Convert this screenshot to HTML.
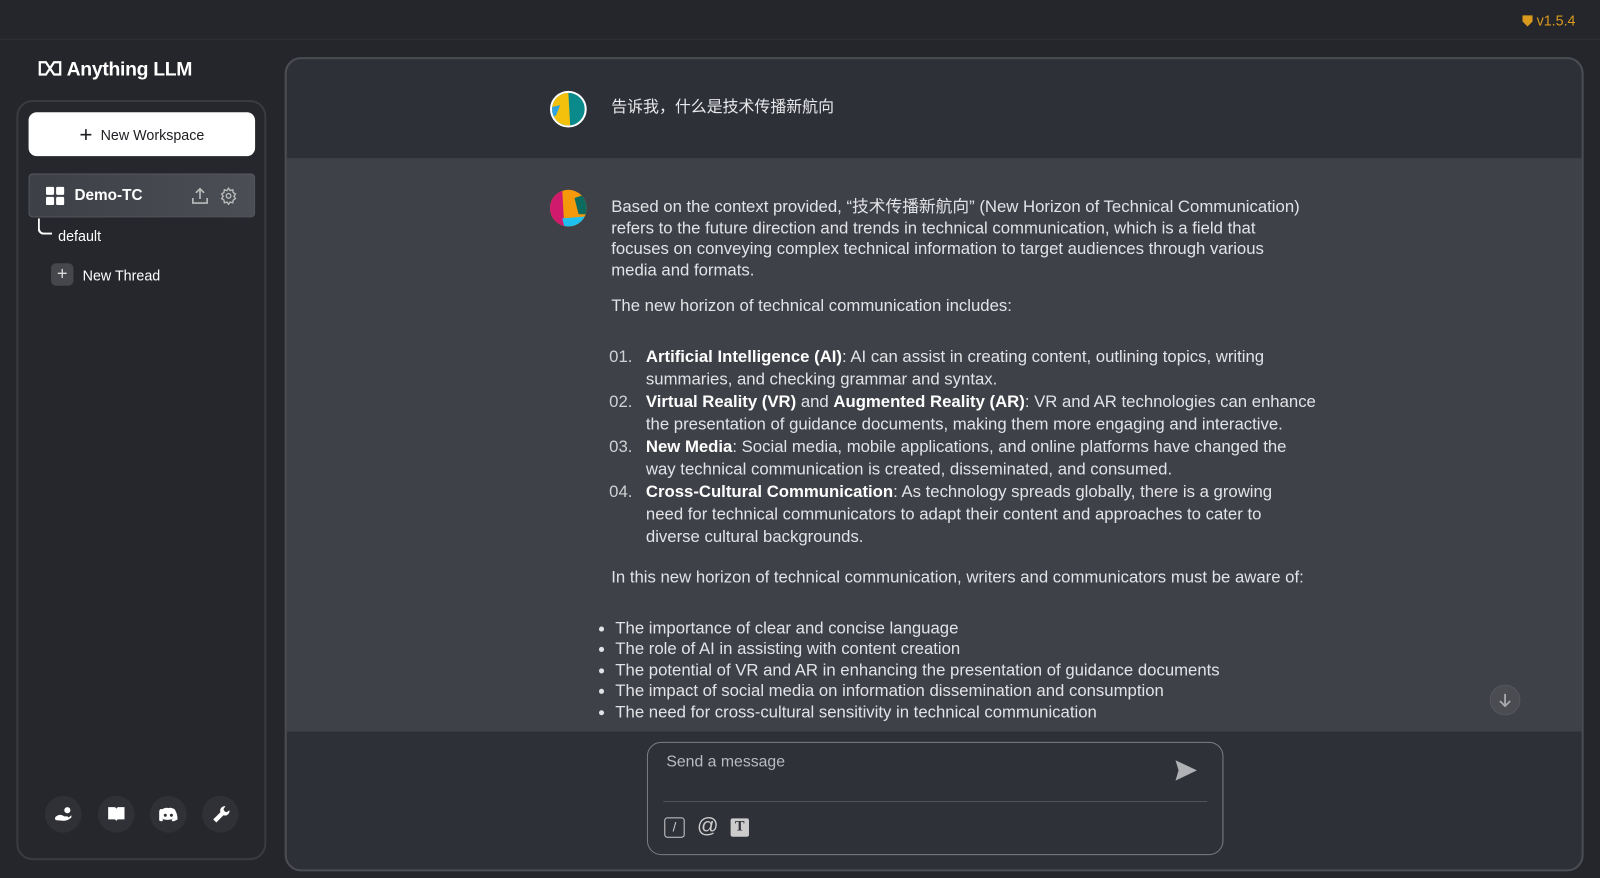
<!DOCTYPE html>
<html><head><meta charset="utf-8"><style>
*{box-sizing:border-box;margin:0;padding:0}
html,body{width:1600px;height:877px;background:#25262b;overflow:hidden}
#w{position:absolute;left:0;top:0;width:1568px;height:860px;transform:scale(1.0204);transform-origin:0 0;font-family:"Liberation Sans","Noto Sans CJK SC",sans-serif;color:#e6e7ea}
.topline{position:absolute;left:0;right:0;top:38px;height:1px;background:#2f3036}
.ver{position:absolute;right:24px;top:12px;color:#d99a1e;font-size:14px}
.logo{position:absolute;left:37px;top:58px;font-size:19px;font-weight:bold;color:#fff;letter-spacing:-0.3px}
.side{position:absolute;left:16px;top:98px;width:245px;height:745px;border:2px solid #3a3b41;border-radius:16px;background:#26272c}
.nw{position:absolute;left:10px;top:10px;width:222px;height:43px;background:#fff;border-radius:8px;color:#1d1e22;font-size:14px;display:flex;align-items:center;justify-content:center;gap:8px}
.ws{position:absolute;left:10px;top:70px;width:222px;height:43px;background:linear-gradient(90deg,#3d4047,#4b4e55);border:1px solid #55585e;border-radius:4px;display:flex;align-items:center;padding-left:16px;font-weight:bold;font-size:15px;color:#fff}
.sb{position:absolute;width:36px;height:36px;border-radius:50%;background:#303136;top:680px;display:flex;align-items:center;justify-content:center}
.main{position:absolute;left:279px;top:56px;width:1273px;height:798px;border:2px solid #4b4d52;border-radius:16px;background:#2e3038;overflow:hidden}
.asst{position:absolute;left:0;right:0;top:97px;height:562px;background:#3f4148}
.txt{font-size:16.4px;line-height:20.6px;color:#e2e3e6;white-space:nowrap}
b{color:#fff}
.av{position:absolute;width:36px;height:36px;border-radius:50%;overflow:hidden}
ol{list-style:none}
ol li{position:relative;padding-left:34px;line-height:22px}
ol li span.n{position:absolute;left:-2px;color:#d0d1d4}
ul{padding-left:18px;margin-left:-14px}
ul li{line-height:20.6px}
.inp{position:absolute;left:353px;top:669px;width:565px;height:111px;border:1px solid #7b7d82;border-radius:14px;background:#2f3139}
</style></head><body><div id="w">
<div class="topline"></div>
<div class="ver"><svg width="10" height="11" viewBox="0 0 10 11" style="vertical-align:-1px"><path d="M0 0H10V6L5 11L0 6Z" fill="#d99a1e"/></svg> v1.5.4</div>
<div class="logo"><svg width="24" height="16" viewBox="0 0 24 16" style="vertical-align:-1px"><path d="M2 2H8L16 14H22V2H16L8 14H2Z" fill="none" stroke="#fff" stroke-width="2.2"/></svg> Anything LLM</div>
<div class="side">
 <div class="nw"><span style="font-size:22px;font-weight:300;line-height:1">+</span>New Workspace</div>
 <div class="ws"><svg width="18" height="18" viewBox="0 0 18 18" style="margin-right:10px"><rect x="0" y="0" width="8" height="8" rx="1.5" fill="#fff"/><rect x="10" y="0" width="8" height="8" rx="1.5" fill="#fff"/><rect x="0" y="10" width="8" height="8" rx="1.5" fill="#fff"/><rect x="10" y="10" width="8" height="8" rx="1.5" fill="#fff"/></svg>Demo-TC
  <svg style="position:absolute;left:158px" width="18" height="18" viewBox="0 0 18 18" fill="none" stroke="#bbb" stroke-width="1.6"><path d="M2 11V16H16V11M9 12V2M5 6L9 2L13 6"/></svg>
  <svg style="position:absolute;left:186px" width="18" height="18" viewBox="0 0 24 24" fill="none" stroke="#bbb" stroke-width="1.8"><circle cx="12" cy="12" r="3"/><path d="M12 2l2 3 3.5-1 .5 3.5 3 2-2 3 2 3-3 2-.5 3.5-3.5-1-2 3-2-3-3.5 1-.5-3.5-3-2 2-3-2-3 3-2L6.5 4 10 5z"/></svg>
 </div>
 <div style="position:absolute;left:19px;top:114px;width:14px;height:16px;border-left:2px solid #fff;border-bottom:2px solid #fff;border-bottom-left-radius:6px"></div>
 <div style="position:absolute;left:39px;top:123px;font-size:14px;color:#fff">default</div>
 <div style="position:absolute;left:32px;top:158px;width:22px;height:22px;border-radius:5px;background:#45474d;color:#ddd;text-align:center;line-height:21px;font-size:18px">+</div>
 <div style="position:absolute;left:63px;top:162px;font-size:14px;color:#fff">New Thread</div>
 <div class="sb" style="left:26px"><svg width="18" height="16" viewBox="0 0 18 16"><circle cx="13" cy="4" r="3" fill="#fff"/><path d="M1 11c3-3 6-3 9-1h3c1 0 1 2 0 2H8c3 0 6 0 9-3v2c-3 3-7 4-12 3-2 0-3 0-4-1z" fill="#fff"/></svg></div>
 <div class="sb" style="left:78px"><svg width="18" height="16" viewBox="0 0 18 16"><path d="M1 1h6c1 0 2 1 2 2v12c0-1-1-2-2-2H1zM17 1h-6c-1 0-2 1-2 2v12c0-1 1-2 2-2h6z" fill="#fff"/></svg></div>
 <div class="sb" style="left:129px"><svg width="18" height="14" viewBox="0 0 18 14"><path d="M3 2c2-1 4-2 6-1 2-1 4 0 6 1 2 3 3 6 3 10-2 1-3 2-5 2l-1-2c1 0 2-1 2-1-4 2-8 2-12 0 0 0 1 1 2 1l-1 2c-2 0-3-1-5-2 0-4 1-7 3-10z" fill="#fff"/><circle cx="6" cy="8" r="1.5" fill="#303136"/><circle cx="12" cy="8" r="1.5" fill="#303136"/></svg></div>
 <div class="sb" style="left:180px"><svg width="18" height="18" viewBox="0 0 18 18"><path d="M2 14l7-7c-1-3 1-6 5-6l-2 3 1 2 2 1 3-2c0 4-3 6-6 5l-7 7z" fill="#fff"/></svg></div>
</div>
<div class="main">
 <div class="av" style="left:258px;top:31px;border:2px solid #fff;background:#0a8a8a"><svg width="36" height="36" viewBox="0 0 36 36"><path d="M0 0H16L18 36H0Z" fill="#f3c10c"/><path d="M0 14L8 12L4 22L0 24Z" fill="#2ea3e0"/></svg></div>
 <div style="position:absolute;left:318px;top:38px;font-size:15.6px;line-height:20px;color:#e8e8ea">告诉我，什么是技术传播新航向</div>
 <div class="asst">
  <div class="av" style="left:258px;top:31px;background:#f49a0a"><svg width="36" height="36" viewBox="0 0 36 36"><path d="M0 0H12L14 36H0Z" fill="#cf1a6e"/><path d="M14 36L12 28L36 26V36Z" fill="#1ec0f0"/><path d="M24 8L36 4V24L28 24Z" fill="#0c6a5e"/></svg></div>
  <div class="txt" style="position:absolute;left:318px;top:38px;width:692px">
   <p>Based on the context provided, “技术传播新航向” (New Horizon of Technical Communication)<br>refers to the future direction and trends in technical communication, which is a field that<br>focuses on conveying complex technical information to target audiences through various<br>media and formats.</p>
   <p style="margin-top:15px">The new horizon of technical communication includes:</p>
   <ol style="margin-top:28px">
    <li><span class="n">01.</span><b>Artificial Intelligence (AI)</b>: AI can assist in creating content, outlining topics, writing<br>summaries, and checking grammar and syntax.</li>
    <li><span class="n">02.</span><b>Virtual Reality (VR)</b> and <b>Augmented Reality (AR)</b>: VR and AR technologies can enhance<br>the presentation of guidance documents, making them more engaging and interactive.</li>
    <li><span class="n">03.</span><b>New Media</b>: Social media, mobile applications, and online platforms have changed the<br>way technical communication is created, disseminated, and consumed.</li>
    <li><span class="n">04.</span><b>Cross-Cultural Communication</b>: As technology spreads globally, there is a growing<br>need for technical communicators to adapt their content and approaches to cater to<br>diverse cultural backgrounds.</li>
   </ol>
   <p style="margin-top:19px">In this new horizon of technical communication, writers and communicators must be aware of:</p>
   <ul style="margin-top:29px">
    <li>The importance of clear and concise language</li>
    <li>The role of AI in assisting with content creation</li>
    <li>The potential of VR and AR in enhancing the presentation of guidance documents</li>
    <li>The impact of social media on information dissemination and consumption</li>
    <li>The need for cross-cultural sensitivity in technical communication</li>
   </ul>
  </div>
  <div style="position:absolute;left:1179px;top:516px;width:30px;height:30px;border-radius:50%;background:#4a4c52;border:1px solid #55575c"><svg width="28" height="28" viewBox="0 0 28 28" fill="none" stroke="#a8a9ad" stroke-width="1.8"><path d="M14 8V20M9 15L14 20L19 15"/></svg></div>
 </div>
 <div class="inp">
  <div style="position:absolute;left:18px;top:10px;font-size:15.5px;color:#b9bbc0">Send a message</div>
  <svg style="position:absolute;left:515px;top:15px" width="24" height="24" viewBox="0 0 24 24"><path d="M2 2L23 12L2 22L5 12Z" fill="#b0b1b4"/></svg>
  <div style="position:absolute;left:15px;right:15px;top:57px;height:1px;background:#50525a"></div>
  <div style="position:absolute;left:16px;top:73px;width:20px;height:20px;border:1.5px solid #ccc;border-radius:3px;color:#ccc;font-size:13px;text-align:center;line-height:17px">/</div>
  <div style="position:absolute;left:48px;top:70px;font-size:21px;color:#ccc">@</div>
  <div style="position:absolute;left:81px;top:74px;width:18px;height:18px;background:#ccc;border-radius:2px;color:#2f3139;font-weight:bold;font-size:14px;text-align:center;line-height:18px;font-family:'Liberation Serif',serif">T</div>
 </div>
</div>
</div></body></html>
